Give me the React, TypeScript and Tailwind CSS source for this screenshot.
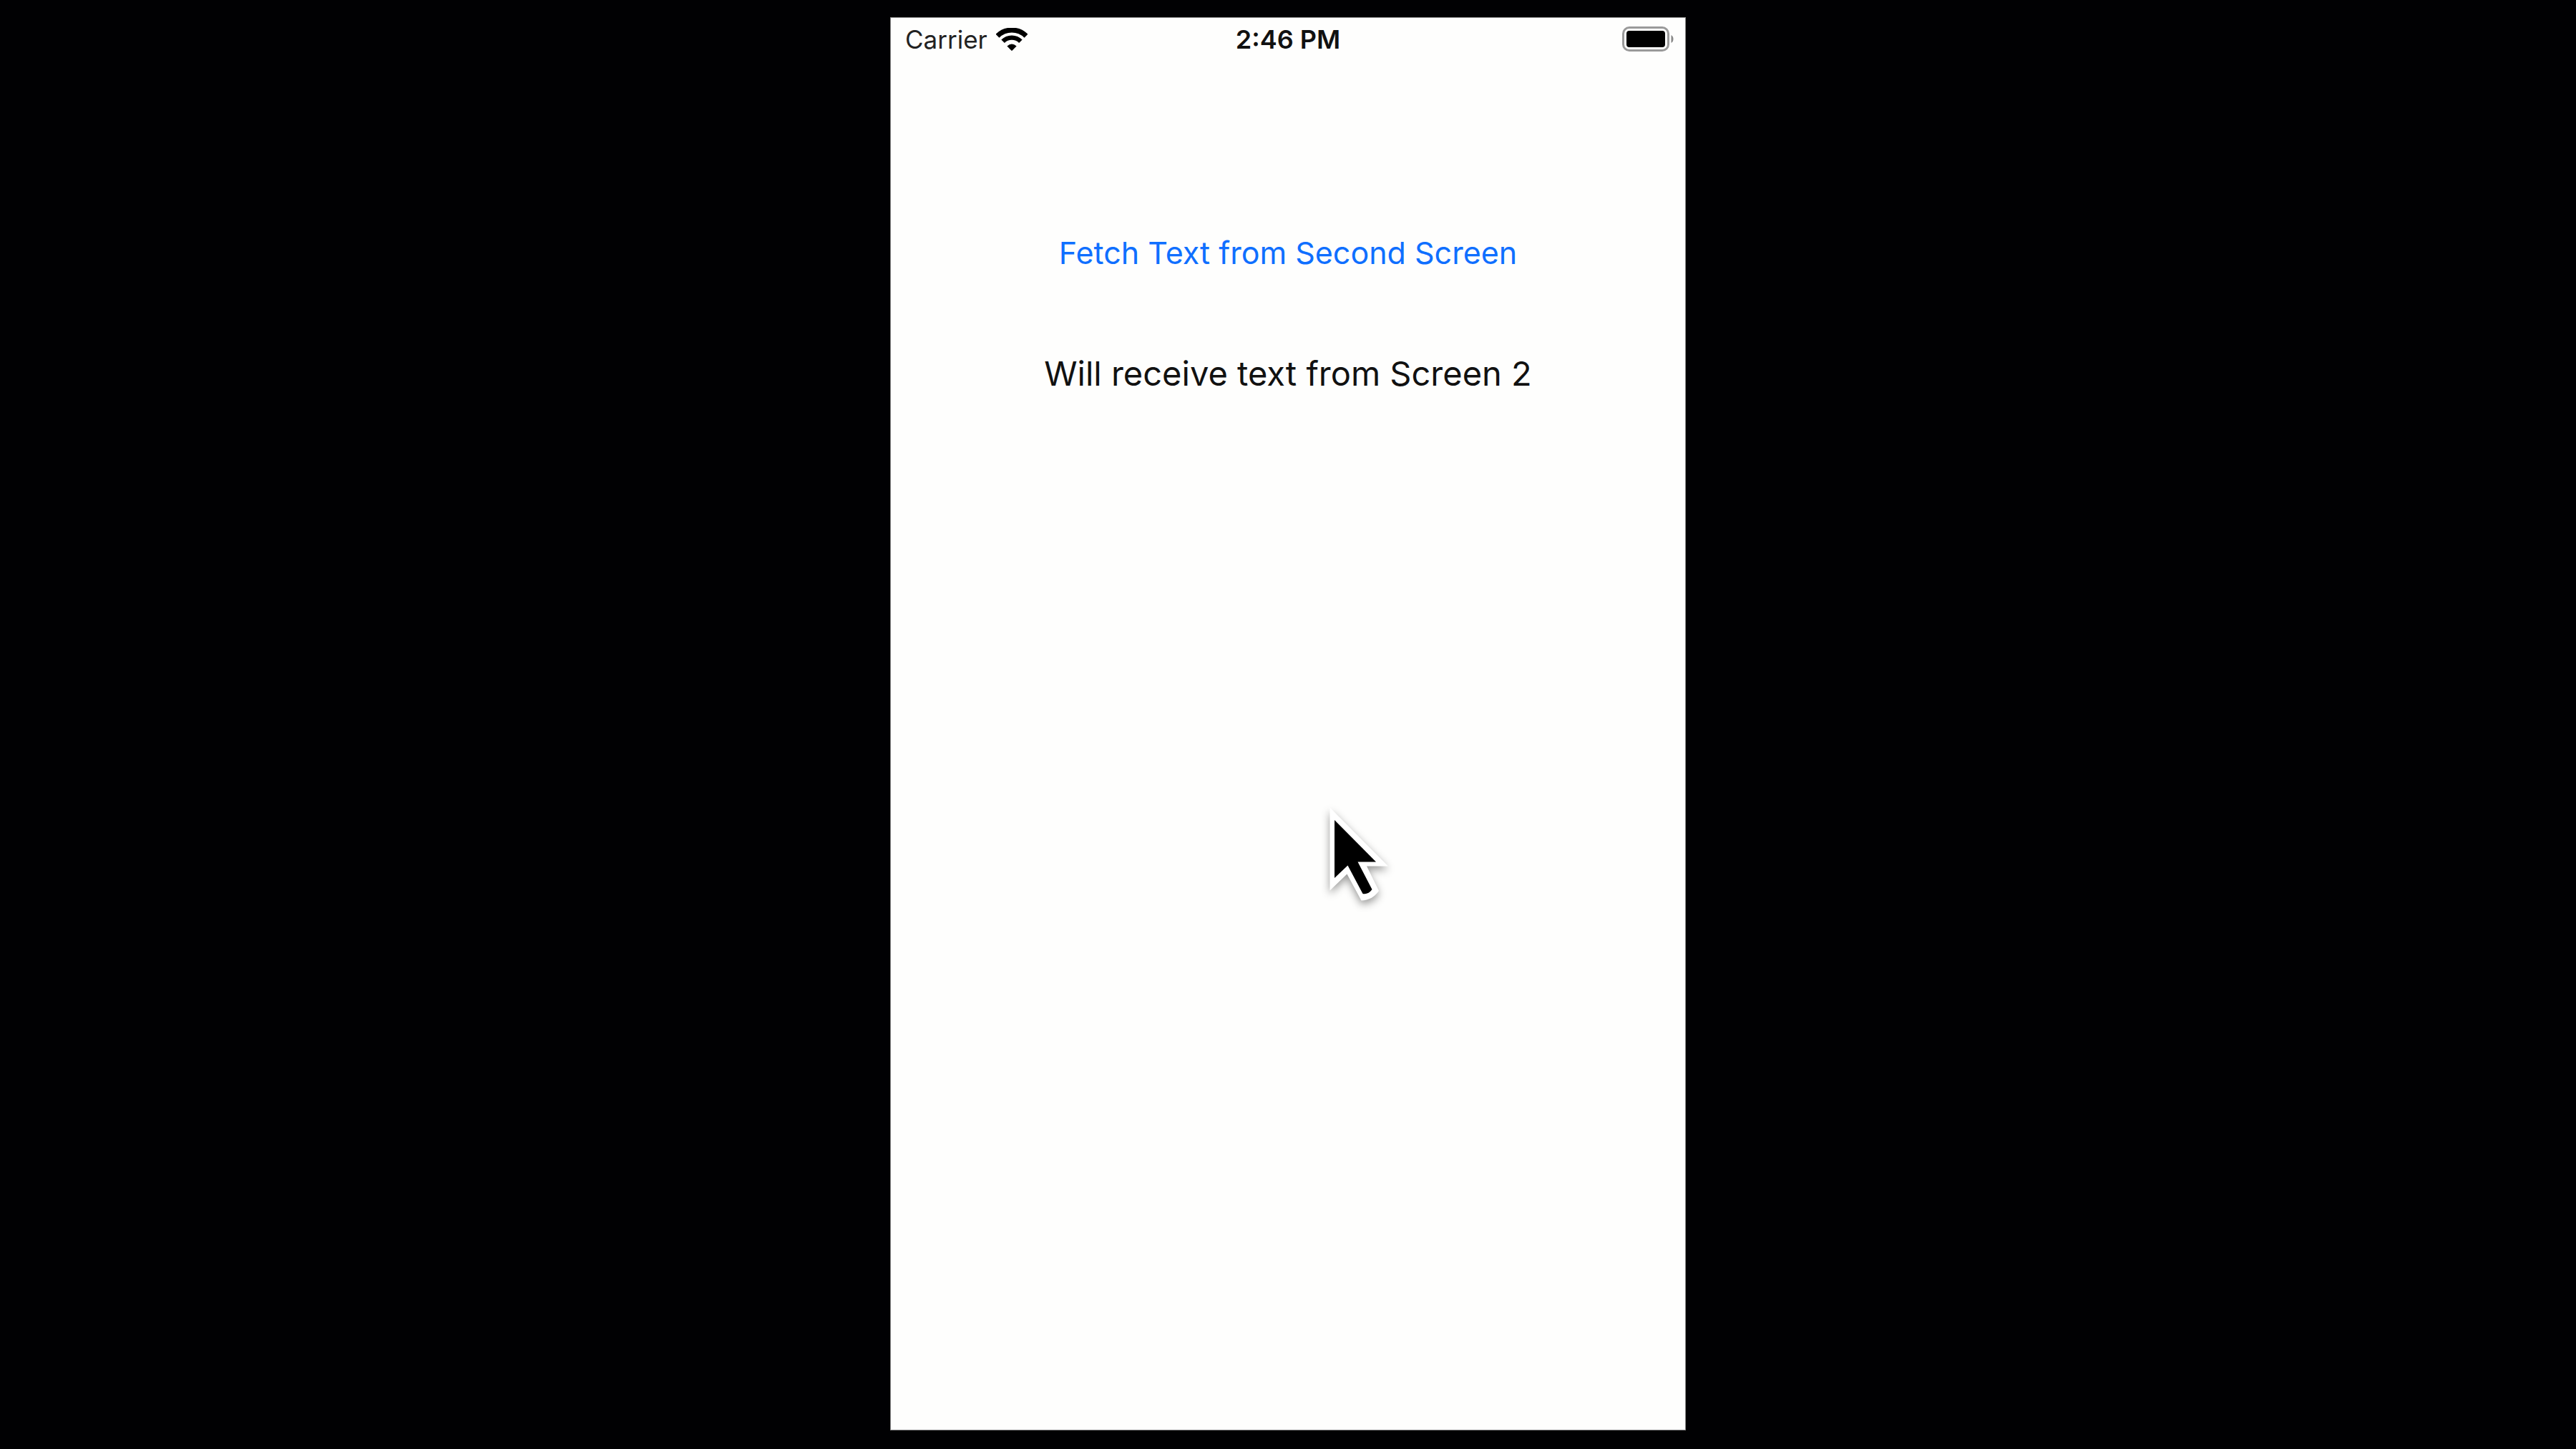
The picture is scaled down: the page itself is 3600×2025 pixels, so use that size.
function WifiIcon() {
  return (
    <svg className="h-8 w-11" viewBox="0 0 44 32" fill="none" stroke="#000" aria-label="Wi-Fi" role="img">
      <path d="M2 11.2 A28.5 28.5 0 0 1 42 11.2" strokeWidth="7" />
      <path d="M9.6 18.8 A17.5 17.5 0 0 1 34.4 18.8" strokeWidth="6.4" />
      <path d="M15.4 25.6 Q22 19.6 28.6 25.6 L22.7 31.6 Q22 32.2 21.3 31.6 Z" fill="#000" stroke="none" />
    </svg>
  );
}

function BatteryIcon() {
  return (
    <svg className="h-9 w-[72px]" viewBox="0 0 72 36" aria-label="Battery full" role="img">
      <rect x="1.5" y="1.5" width="63" height="32" rx="8.5" fill="none" stroke="#9a9a9a" strokeWidth="3" />
      <rect x="6" y="6" width="54" height="23" rx="4" fill="#000" />
      <path d="M68.5 12 Q71.5 13.5 71.5 17.5 T68.5 23 Z" fill="#888" />
    </svg>
  );
}

function Pointer() {
  return (
    <svg
      className="pointer-events-none absolute top-[55%] left-[52%] h-[180px] w-[150px] drop-shadow-[0_5px_6px_rgba(0,0,0,0.4)]"
      viewBox="2 0 150 180"
      aria-hidden="true"
    >
      <path d="M38.5 18.5 L120 100.5 H90 L107 135 Q98 148 82.5 148.5 L62.5 111.5 L38.5 134.5 Z" fill="#fff" />
      <path d="M45 36 L103 94.5 H77.5 L97.5 133 Q92 140.5 84.5 139 L63.5 99.5 L45 117 Z" fill="#000" />
    </svg>
  );
}

export default function App() {
  return (
    <main className="flex min-h-screen items-start justify-center bg-[#010103] pt-6 font-['Inter',sans-serif] text-black">
      <section className="relative flex aspect-[563/1000] h-[calc(100vh-50px)] flex-col border border-[#8a8a8a] bg-[#fefefd]">
        <header className="grid grid-cols-3 items-center px-5 pt-2">
          <div className="flex items-center gap-3 text-[35px] leading-11 text-[#222]">
            <span>Carrier</span>
            <WifiIcon />
          </div>
          <time className="text-center text-[36px] leading-11 font-semibold text-[#111]">2:46 PM</time>
          <div className="-mr-1 flex justify-end">
            <BatteryIcon />
          </div>
        </header>
        <div className="flex flex-col items-center gap-[109px] pt-[248px]">
          <button type="button" className="text-[43px] leading-14 text-[#0f6fff]">
            Fetch Text from Second Screen
          </button>
          <p className="text-[47px] leading-16 text-[#111]">Will receive text from Screen 2</p>
        </div>
        <Pointer />
      </section>
    </main>
  );
}
